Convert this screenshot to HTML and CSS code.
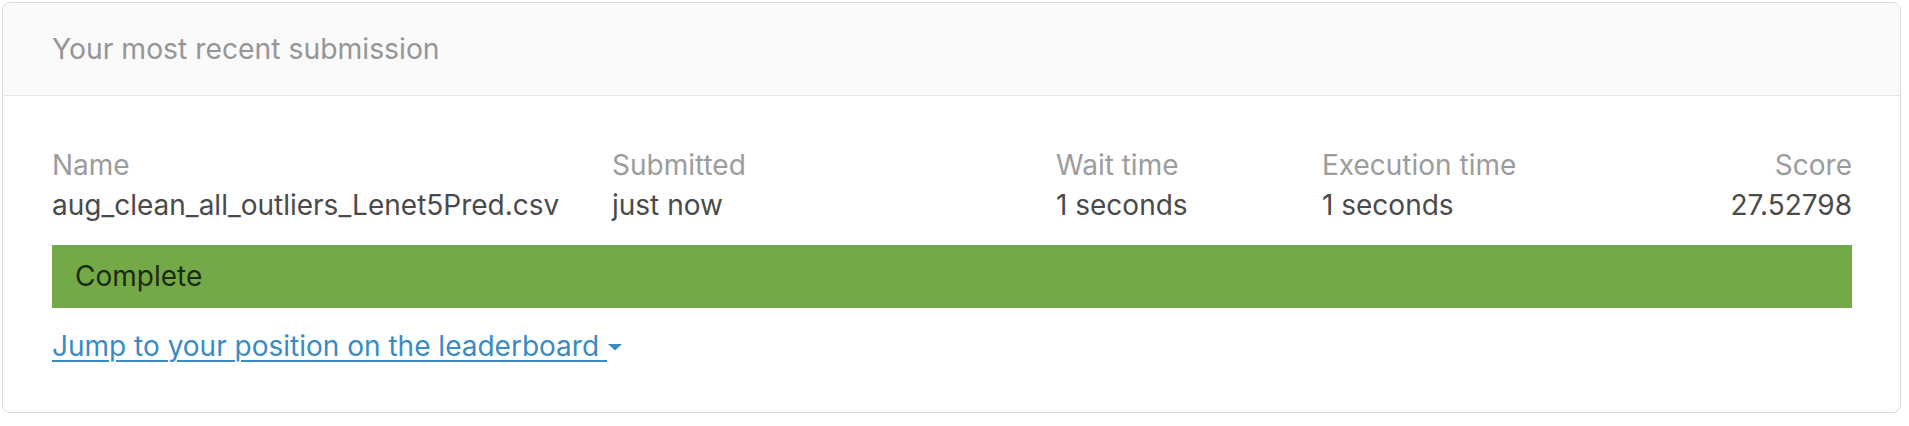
FILE: index.html
```html
<!DOCTYPE html>
<html>
<head>
<meta charset="utf-8">
<link rel="stylesheet" href="styles.css">
</head>
<body>
<div class="card">
  <div class="card-header">Your most recent submission</div>
  <div class="card-body">
    <div class="grid">
      <div class="label">Name</div>
      <div class="label">Submitted</div>
      <div class="label">Wait time</div>
      <div class="label">Execution time</div>
      <div class="label right">Score</div>
      <div class="value">aug_clean_all_outliers_Lenet5Pred.csv</div>
      <div class="value">just now</div>
      <div class="value">1 seconds</div>
      <div class="value">1 seconds</div>
      <div class="value right">27.52798</div>
    </div>
    <div class="status">Complete</div>
    <div class="jump"><a class="jump-link" href="#">Jump to your position on the leaderboard </a><svg class="caret" width="16" height="8" viewBox="0 0 16 8"><path d="M1 1 L15 1 L8 7.5 Z" fill="#3a8bc4"/></svg></div>
  </div>
</div>
</body>
</html>
```

FILE: styles.css
```css
html, body {
  margin: 0;
  padding: 0;
  background: #ffffff;
}
body {
  font-family: Inter, "Noto Sans", sans-serif;
}
.card {
  margin: 2px 0 0 2px;
  width: 1899px;
  box-sizing: border-box;
  border: 1px solid #dcdcdc;
  border-radius: 8px;
  overflow: hidden;
}
.card-header {
  height: 92px;
  line-height: 92px;
  padding-left: 49px;
  background: #fafafa;
  border-bottom: 1px solid #e6e6e6;
  font-size: 28.3px;
  color: #969696;
}
.card-body {
  padding: 49px 48px 46px 49px;
}
.grid {
  display: grid;
  grid-template-columns: 560px 444px 266px 1fr 1fr;
  font-size: 28px;
  line-height: 40px;
}
.label {
  color: #9c9c9c;
}
.value {
  color: #4a4a4a;
}
.right {
  text-align: right;
}
.status {
  margin-top: 20px;
  height: 63px;
  line-height: 63px;
  padding-left: 23px;
  background: #73a946;
  color: #1e2a14;
  font-size: 28px;
}
.jump {
  margin-top: 18px;
  font-size: 28px;
  line-height: 40px;
  display: flex;
  align-items: center;
}
.jump-link {
  color: #3a8bc4;
  text-decoration: underline;
  text-underline-offset: 4px;
  text-decoration-thickness: 2px;
  white-space: pre;
}
.caret {
  display: block;
  margin-top: 2px;
}
```
